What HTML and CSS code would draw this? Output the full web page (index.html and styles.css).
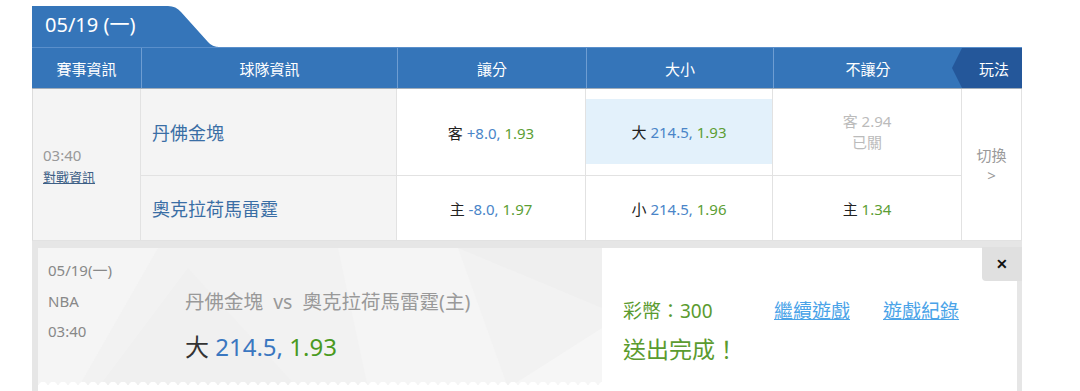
FILE: index.html
```html
<!DOCTYPE html>
<html lang="zh-Hant">
<head>
    <meta charset="UTF-8">
    <title>Game</title>
    <link rel="stylesheet" href="styles.css">
</head>
<body>
    <div class="board">
        <div class="date-tab">05/19 (一)</div>

        <div class="grid head">
            <div class="th">賽事資訊</div>
            <div class="th">球隊資訊</div>
            <div class="th">讓分</div>
            <div class="th">大小</div>
            <div class="th">不讓分</div>
            <div class="th play">玩法</div>
        </div>

        <div class="grid body">
            <div class="td info">
                <span class="time">03:40</span>
                <a href="#" class="vs-link">對戰資訊</a>
            </div>
            <div class="td team">丹佛金塊</div>
            <div class="td odds"><span>客 <span class="num">+8.0,</span> <span class="rate">1.93</span></span></div>
            <div class="td odds picked"><div class="pick-box"><span>大 <span class="num">214.5,</span> <span class="rate">1.93</span></span></div></div>
            <div class="td odds closed"><span>客 2.94<br>已關</span></div>
            <div class="td switch"><span>切換<br><span class="arrow">&gt;</span></span></div>

            <div class="td team">奧克拉荷馬雷霆</div>
            <div class="td odds"><span>主 <span class="num">-8.0,</span> <span class="rate">1.97</span></span></div>
            <div class="td odds"><span>小 <span class="num">214.5,</span> <span class="rate">1.96</span></span></div>
            <div class="td odds"><span>主 <span class="rate">1.34</span></span></div>
        </div>

        <div class="popup">
            <button class="close">&#10005;</button>
            <div class="popup-inner">
                <div class="ticket">
                    <svg class="facets" width="564" height="140" viewBox="0 0 564 140">
                        <polygon points="0,0 120,0 40,140 0,140" fill="#f5f5f5"/>
                        <polygon points="60,140 150,20 260,140" fill="#f0f0f0"/>
                        <polygon points="300,0 420,0 470,140 330,140" fill="#f5f5f5"/>
                        <polygon points="420,0 564,0 564,60" fill="#efefef"/>
                        <polygon points="470,140 564,80 564,140" fill="#f6f6f6"/>
                    </svg>
                    <div class="ticket-meta">
                        <div>05/19(一)</div>
                        <div>NBA</div>
                        <div>03:40</div>
                    </div>
                    <div class="ticket-main">
                        <div class="match">丹佛金塊 &nbsp;vs&nbsp; 奧克拉荷馬雷霆(主)</div>
                        <div class="bet">大 <span class="num">214.5,</span> <span class="rate">1.93</span></div>
                    </div>
                </div>
                <div class="result">
                    <div class="result-row">
                        <span class="coins">彩幣：300</span>
                        <a href="#" class="link">繼續遊戲</a>
                        <a href="#" class="link">遊戲紀錄</a>
                    </div>
                    <div class="done">送出完成！</div>
                </div>
            </div>
        </div>
    </div>
</body>
</html>
```

FILE: styles.css
```css
body { margin: 0; background: #fff; font-family: "Noto Sans", "Noto Sans CJK TC", sans-serif; overflow: hidden; }
.board { width: 990px; margin: 6px 0 0 32px; }

.date-tab {
    width: 186px;
    height: 41px;
    box-sizing: border-box;
    padding: 5px 0 0 13px;
    background: #3575b9;
    color: #fff;
    font-size: 20px;
    line-height: 28px;
    clip-path: path('M0 0 H136 Q144 0 149 6 L176 36 Q180 41 188 41 H0 Z');
}

.grid { display: grid; grid-template-columns: 109px 256px 189px 187px 189px 60px; }

.head { height: 42px; background: #3575b9; border-top: 1px solid #5a8fcb; border-bottom: 1px solid #a2adb9; box-sizing: border-box; }
.th {
    color: #fff;
    font-size: 15px;
    display: flex;
    align-items: center;
    justify-content: center;
    border-left: 1px solid #6e9dd2;
}
.th:first-child { border-left: none; }
.th.play { position: relative; background: #24579a; border-left: none; padding-left: 4px; }
.th.play::before {
    content: "";
    position: absolute;
    left: -10px;
    top: 0;
    width: 10px;
    height: 100%;
    background: #24579a;
    clip-path: polygon(100% 0, 100% 100%, 0 50%);
}

.body { grid-template-rows: 87px 65px; }
.td {
    box-sizing: border-box;
    border-right: 1px solid #e2e2e2;
    border-bottom: 1px solid #e2e2e2;
    font-size: 15px;
    color: #222;
}
.info {
    grid-row: span 2;
    background: #f4f4f4;
    border-left: 1px solid #dcdcdc;
    display: flex;
    flex-direction: column;
    justify-content: center;
    padding: 0 0 0 10px;
}
.time { color: #999; font-size: 15px; line-height: 24px; }
.vs-link { color: #3d5f86; font-size: 13px; line-height: 20px; }
.team { background: #f4f4f4; color: #3a6ea5; font-size: 18px; display: flex; align-items: center; padding-left: 11px; }
.odds { display: flex; align-items: center; justify-content: center; }
.num { color: #4a85c8; }
.rate { color: #5c9e35; }
.picked { align-items: stretch; padding: 10px 0 11px; }
.pick-box { flex: 1; background: #e3f1fb; display: flex; align-items: center; justify-content: center; }
.closed { color: #bbb; line-height: 21px; text-align: center; }
.switch {
    grid-row: span 2;
    color: #999;
    display: flex;
    align-items: center;
    justify-content: center;
    text-align: center;
    line-height: 20px;
}
.arrow { font-size: 15px; }

.popup { position: relative; background: #e6e6e6; padding: 7px 5px 0 6px; height: 150px; box-sizing: border-box; }
.close {
    position: absolute;
    right: 0;
    top: 6px;
    width: 40px;
    height: 34px;
    border: none;
    border-bottom-left-radius: 4px;
    background: #e0e0e0;
    color: #111;
    font-size: 14px;
    font-weight: bold;
    padding: 0;
    z-index: 2;
}
.popup-inner { background: #fff; display: flex; height: 143px; }

.ticket {
    position: relative;
    width: 564px;
    height: 137px;
    background: #f2f2f2;
    display: flex;
    overflow: hidden;
}
.ticket::after {
    content: "";
    position: absolute;
    left: 0;
    right: 0;
    bottom: 0;
    height: 5px;
    background: radial-gradient(circle at 5px 6px, #fff 4px, transparent 4.5px) repeat-x;
    background-size: 10px 5px;
}
.facets { position: absolute; left: 0; top: 0; }
.ticket-meta { position: relative; width: 147px; padding: 7px 0 0 10px; box-sizing: border-box; color: #888; font-size: 15px; line-height: 30.5px; }
.ticket-main { position: relative; padding-top: 41px; }
.match { color: #999; font-size: 19.5px; line-height: 26px; }
.bet { color: #333; font-size: 24px; line-height: 32px; margin-top: 16px; }
.bet .num { color: #3a77c0; }
.bet .rate { color: #4a9a1f; }

.result { padding: 50px 0 0 21px; }
.result-row { display: flex; line-height: 26px; font-size: 19px; }
.coins { width: 151px; color: #5b9b2f; font-size: 19px; }
.link { color: #4aa3e8; margin-right: 33px; }
.done { color: #5b9b2f; font-size: 23px; line-height: 30px; margin-top: 10px; }
```
